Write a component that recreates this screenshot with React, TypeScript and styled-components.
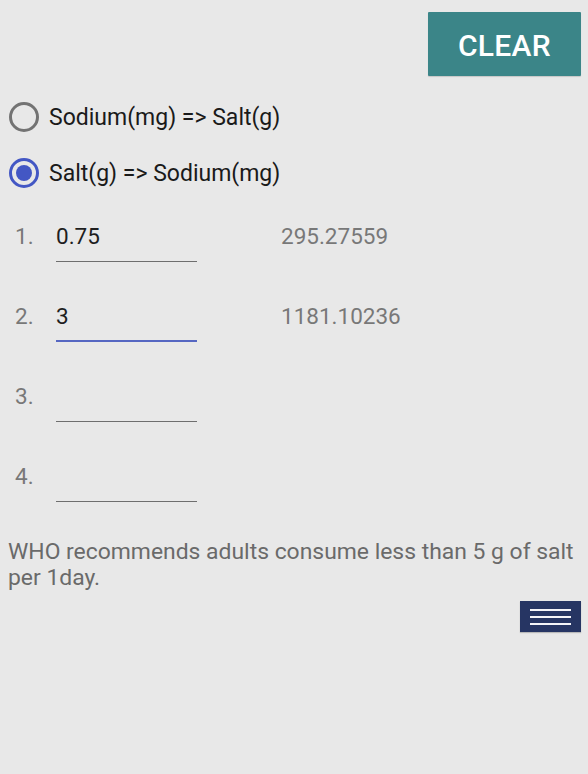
import React from "react";
import styled, { createGlobalStyle } from "styled-components";

const Global = createGlobalStyle`
  html, body { margin: 0; padding: 0; background: #e8e8e8; }
  body { font-family: Roboto, "Noto Sans", Arial, sans-serif; }
`;

const Page = styled.div`
  min-height: 774px;
  box-sizing: border-box;
  padding: 12px 7px 0 8px;
  background: #e8e8e8;
`;

const TopBar = styled.div`
  display: flex;
  justify-content: flex-end;
`;

const ClearButton = styled.button`
  width: 153px;
  height: 64px;
  border: none;
  border-radius: 1px;
  background: #3b8588;
  color: #ffffff;
  font-family: Roboto, sans-serif;
  font-weight: 500;
  font-size: 30px;
  letter-spacing: 0.3px;
  padding: 2px 0 0 0;
  box-shadow: 0 1px 1px rgba(0,0,0,0.15);
`;

const RadioGroup = styled.div`
  margin-top: 13px;
  display: flex;
  flex-direction: column;
`;

const RadioRow = styled.label`
  height: 56px;
  display: flex;
  align-items: center;
  gap: 10px;
  padding-left: 1px;
  font-size: 23px;
  color: #1a1a1a;
`;

const RadioCircle = styled.span<{ $checked?: boolean }>`
  width: 30px;
  height: 30px;
  box-sizing: border-box;
  border-radius: 50%;
  border: 3px solid ${(p) => (p.$checked ? "#4357c4" : "#737373")};
  display: flex;
  align-items: center;
  justify-content: center;
  &::after {
    content: "";
    width: 16px;
    height: 16px;
    border-radius: 50%;
    background: #4357c4;
    display: ${(p) => (p.$checked ? "block" : "none")};
  }
`;

const Rows = styled.div`
  display: flex;
  flex-direction: column;
`;

const Row = styled.div`
  height: 80px;
  box-sizing: border-box;
  padding-top: 13px;
  display: grid;
  grid-template-columns: 48px 141px 84px 1fr;
  align-items: start;
  font-size: 22.5px;
`;

const Num = styled.div`
  padding-top: 10px;
  line-height: 24px;
  padding-left: 7px;
  color: #787878;
`;

const Field = styled.div<{ $focused?: boolean }>`
  height: 48px;
  box-sizing: border-box;
  padding-top: 10px;
  line-height: 24px;
  color: #1e1e1e;
  border-bottom: ${(p) => (p.$focused ? "2px solid #5667c2" : "1px solid #6e6e6e")};
`;

const Result = styled.div`
  grid-column: 4;
  padding-top: 10px;
  line-height: 24px;
  color: #787878;
`;

const Note = styled.p`
  margin: 18px 0 0 0;
  font-size: 22.9px;
  line-height: 26px;
  color: #6a6a6a;
`;

const MenuBar = styled.div`
  display: flex;
  justify-content: flex-end;
  margin-top: 10px;
`;

const MenuButton = styled.button`
  width: 61px;
  height: 31px;
  border: none;
  padding: 0;
  background: #263563;
  display: flex;
  flex-direction: column;
  align-items: center;
  justify-content: center;
  gap: 5px;
  box-shadow: 0 1px 1px rgba(0,0,0,0.2);
`;

const MenuLine = styled.span`
  display: block;
  width: 41px;
  height: 2px;
  background: #f4f4f8;
`;

const values = [
  { n: "1.", v: "0.75", r: "295.27559" },
  { n: "2.", v: "3", r: "1181.10236", focused: true },
  { n: "3.", v: "", r: "" },
  { n: "4.", v: "", r: "" },
];

export default function App() {
  return (
    <>
      <Global />
      <Page>
        <TopBar>
          <ClearButton>CLEAR</ClearButton>
        </TopBar>
        <RadioGroup>
          <RadioRow>
            <RadioCircle />
            Sodium(mg) =&gt; Salt(g)
          </RadioRow>
          <RadioRow>
            <RadioCircle $checked />
            Salt(g) =&gt; Sodium(mg)
          </RadioRow>
        </RadioGroup>
        <Rows>
          {values.map((x) => (
            <Row key={x.n}>
              <Num>{x.n}</Num>
              <Field $focused={x.focused}>{x.v}</Field>
              <Result>{x.r}</Result>
            </Row>
          ))}
        </Rows>
        <Note>WHO recommends adults consume less than 5 g of salt per 1day.</Note>
        <MenuBar>
          <MenuButton aria-label="menu">
            <MenuLine />
            <MenuLine />
            <MenuLine />
          </MenuButton>
        </MenuBar>
      </Page>
    </>
  );
}
